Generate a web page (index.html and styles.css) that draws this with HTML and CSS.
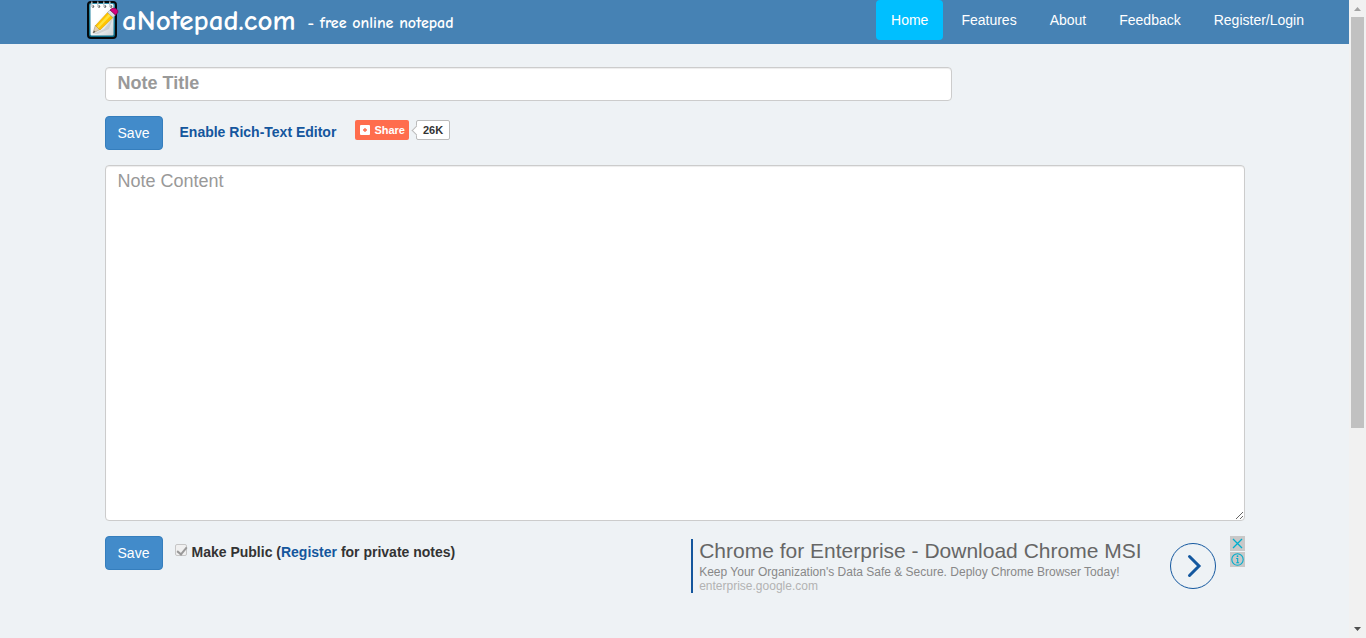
FILE: index.html
```html
<!DOCTYPE html>
<html lang="en">
<head>
<meta charset="utf-8">
<title>aNotepad.com - free online notepad</title>
<link rel="stylesheet" href="styles.css">
</head>
<body>
<div class="window">
  <div class="page">
    <header class="topbar">
      <a class="brand" href="#">
        <svg class="brand-icon" width="34" height="40" viewBox="0 0 34 40" aria-hidden="true">
          <defs>
            <linearGradient id="paper" x1="0" y1="0" x2="1" y2="1"><stop offset="0.4" stop-color="#fff"/><stop offset="1" stop-color="#ccd2d6"/></linearGradient>
            <linearGradient id="cover" x1="0" y1="0" x2="0" y2="1"><stop offset="0" stop-color="#2f8fae"/><stop offset="1" stop-color="#0a6a86"/></linearGradient>
          </defs>
          <rect x="2" y="2" width="28" height="36" rx="3" fill="url(#cover)" stroke="#05090c" stroke-width="2"/>
          <rect x="4.500" y="4" width="23" height="31.500" rx="1" fill="url(#paper)"/>
          <g fill="#555"><circle cx="7" cy="6.500" r="1.200"/><circle cx="13" cy="6.500" r="1.200"/><circle cx="19" cy="6.500" r="1.200"/><circle cx="25" cy="6.500" r="1.200"/></g>
          <path d="M7 7Q5 5 6 1.500M13 7Q11 5 12 1.500M19 7Q17 5 18 1.500M25 7Q23 5 24 1.500" fill="none" stroke="#b9c3c8" stroke-width="1.300"/>
          <path d="M7 34L18 29L27 18L23 29L12 34Z" fill="#a8b0b5" opacity=".4"/>
          <path d="M7 33L9.500 25L14 29.500Z" fill="#e3cfae" stroke="#a59473" stroke-width=".6"/>
          <path d="M7 33L8 30.500L9.500 32Z" fill="#555"/>
          <path d="M9.500 25.500L21.500 12.500L27 17.500L14 30Z" fill="#ffc400" stroke="#d39a00" stroke-width=".5"/>
          <path d="M11 26.500L23 13.800L24.800 15.500L12.500 28.300Z" fill="#ffe23c"/>
          <path d="M21.500 12.500L24 10L29.500 15L27 17.500Z" fill="#dcdfe5" stroke="#888" stroke-width=".5"/>
          <path d="M24 10Q27.500 6.500 31 9.500Q33.500 12 29.500 15Z" fill="#d5007e" stroke="#7b004b" stroke-width=".7"/>
        </svg>
        <span class="brand-name">aNotepad.com</span>
        <span class="tagline">- free online notepad</span>
      </a>
      <nav class="nav">
        <a class="nav-link active" href="#">Home</a>
        <a class="nav-link" href="#">Features</a>
        <a class="nav-link" href="#">About</a>
        <a class="nav-link" href="#">Feedback</a>
        <a class="nav-link" href="#">Register/Login</a>
      </nav>
    </header>

    <main class="container">
      <input class="field title-field" type="text" placeholder="Note Title" aria-label="Note Title">
      <div class="toolbar">
        <button class="save" type="button">Save</button>
        <a class="link editor-link" href="#">Enable Rich-Text Editor</a>
        <div class="share">
          <button class="share-button" type="button">
            <svg width="10" height="10" viewBox="0 0 10 10" aria-hidden="true"><rect width="10" height="10" rx="1" fill="#fff"/><path d="M5 3V7M3 5H7" stroke="#ff6d4d" stroke-width="1.300"/></svg>
            Share
          </button>
          <span class="share-count">26K</span>
        </div>
      </div>
      <textarea class="field content-field" placeholder="Note Content" aria-label="Note Content"></textarea>
      <div class="footer-row">
        <div class="save-group">
          <button class="save" type="button">Save</button>
          <div class="public">
            <input class="check" id="public" type="checkbox" checked disabled>
            <label for="public">Make Public (<a class="link" href="#">Register</a> for private notes)</label>
          </div>
        </div>
        <aside class="ad">
          <div class="ad-text">
            <a class="ad-title" href="#">Chrome for Enterprise - Download Chrome MSI</a>
            <span class="ad-copy">Keep Your Organization's Data Safe &amp; Secure. Deploy Chrome Browser Today!</span>
            <a class="ad-url" href="#">enterprise.google.com</a>
          </div>
          <a class="ad-go" href="#" aria-label="Open">
            <svg width="46" height="46" viewBox="0 0 46 46"><circle cx="23" cy="23" r="22.500" fill="none" stroke="#14589f"/><path d="M19.500 13.500L29 23L19.500 32.500" fill="none" stroke="#14589f" stroke-width="3" stroke-linecap="round"/></svg>
          </a>
          <div class="ad-controls">
            <button class="ad-control" type="button" aria-label="Close ad"><svg width="15" height="15" viewBox="0 0 15 15"><path d="M3 3L12 12M12 3L3 12" stroke="#00aecd" stroke-width="1.300"/></svg></button>
            <button class="ad-control" type="button" aria-label="Ad information"><svg width="15" height="15" viewBox="0 0 15 15"><circle cx="7.500" cy="7.500" r="5.700" fill="none" stroke="#00aecd" stroke-width="1.100"/><path d="M6.200 6.500H7.700V10.800M6.200 10.800H9.100" fill="none" stroke="#00aecd" stroke-width="1.100"/><circle cx="7.500" cy="4.200" r=".9" fill="#00aecd"/></svg></button>
          </div>
        </aside>
      </div>
    </main>
  </div>
  <div class="scrollbar" aria-hidden="true">
    <svg width="17" height="17" viewBox="0 0 17 17"><path d="M5 11L8.500 7L12 11Z" fill="#a3a3a3"/></svg>
    <div class="track"><div class="thumb"></div></div>
    <svg width="17" height="17" viewBox="0 0 17 17"><path d="M5 6L8.500 10L12 6Z" fill="#505050"/></svg>
  </div>
</div>
</body>
</html>
```
FILE: styles.css
```css
* { box-sizing: border-box; }
body {
  margin: 0;
  background: #eef2f5;
  color: #333;
  font: 14px/20px "Liberation Sans", Arial, sans-serif;
}
a { text-decoration: none; }
button { font-family: inherit; cursor: pointer; }
svg { display: block; }

.window { display: flex; min-height: 100vh; }
.page { flex: 1; min-width: 0; }

.topbar {
  display: flex;
  justify-content: space-between;
  align-items: flex-start;
  height: 44px;
  padding: 0 30px 0 86px;
  background: #4682b4;
}
.brand {
  display: flex;
  align-items: center;
  height: 40px;
  color: #fff;
  font-family: "Comic Sans MS", "Comic Neue", "Open Sans", sans-serif;
  font-weight: 700;
}
.brand-icon { margin-right: 2px; }
.brand-name { padding-top: 2px; font-size: 29px; }
.tagline { margin-left: 12px; padding-top: 6px; font-size: 16px; }
.nav { display: flex; gap: 3px; }
.nav-link { padding: 10px 15px; border-radius: 4px; color: #fff; }
.nav-link.active { background: #00bfff; }

.container {
  display: flex;
  flex-direction: column;
  gap: 15px;
  max-width: 1170px;
  margin: 0 auto;
  padding: 23px 15px;
}
.field {
  display: block;
  border: 1px solid #ccc;
  border-radius: 4px;
  background: #fff;
  color: #555;
  font: 18px/26px "Liberation Sans", Arial, sans-serif;
  box-shadow: inset 0 1px 1px rgba(0, 0, 0, .075);
}
.field::placeholder { color: #999; }
.title-field { width: calc(75% - 8px); height: 34px; padding: 2px 12px 4px; font-weight: 700; }
.content-field { width: 100%; height: 356px; padding: 2px 12px; }

.toolbar { display: flex; align-items: flex-start; }
.save {
  min-width: 58px;
  padding: 6px 12px;
  border: 1px solid #357ebd;
  border-radius: 4px;
  background: #428bca;
  color: #fff;
  font-size: 14px;
  line-height: 20px;
}
.link { color: #14569d; font-weight: 700; }
.editor-link { margin: 6px 19px 0 17px; }

.share { display: flex; gap: 7px; padding-top: 4px; }
.share-button {
  display: flex;
  align-items: center;
  gap: 4px;
  height: 20px;
  padding: 0 4px 0 5px;
  border: 0;
  border-radius: 2px;
  background: #ff6d4d;
  color: #fff;
  font-size: 11px;
  font-weight: 700;
}
.share-count {
  position: relative;
  padding: 0 6px;
  border: 1px solid #bbb;
  border-radius: 2px;
  background: #fff;
  font-size: 11px;
  font-weight: 700;
  line-height: 18px;
}
.share-count::before {
  content: "";
  position: absolute;
  left: -4px;
  top: 6px;
  width: 6px;
  height: 6px;
  border: solid #bbb;
  border-width: 0 0 1px 1px;
  background: #fff;
  transform: rotate(45deg);
}

.footer-row { display: flex; justify-content: space-between; align-items: flex-start; }
.save-group { display: flex; gap: 12px; }
.public { display: flex; align-items: flex-start; gap: 5px; padding-top: 6px; font-weight: 700; }
.check {
  appearance: none;
  width: 12px;
  height: 12px;
  margin: 2px 0 0;
  border: 1px solid #c6c6c6;
  border-radius: 2px;
  background: #f0f0f0;
}
.check:checked::before {
  content: "";
  display: block;
  width: 4px;
  height: 8px;
  margin: 0 0 0 3px;
  border: solid #999;
  border-width: 0 2px 2px 0;
  transform: rotate(40deg);
}

.ad { display: flex; align-items: flex-start; }
.ad-text {
  display: flex;
  flex-direction: column;
  margin: 3px 28px 0 0;
  padding-left: 6px;
  border-left: 2px solid #14569d;
  font-size: 12px;
  line-height: 14px;
}
.ad-title { padding-bottom: 2px; color: #666; font-size: 21px; line-height: 24px; }
.ad-copy { color: #888; }
.ad-url { color: #b3b3b3; }
.ad-go { margin: 7px 14px 0 0; }
.ad-controls { display: grid; gap: 1px; }
.ad-control { padding: 0; border: 0; background: #c8c8c8; }

.scrollbar { display: flex; flex-direction: column; width: 17px; background: #f1f1f1; }
.track { flex: 1; padding: 0 2px; }
.thumb { height: 68%; background: #c1c1c1; }
```
